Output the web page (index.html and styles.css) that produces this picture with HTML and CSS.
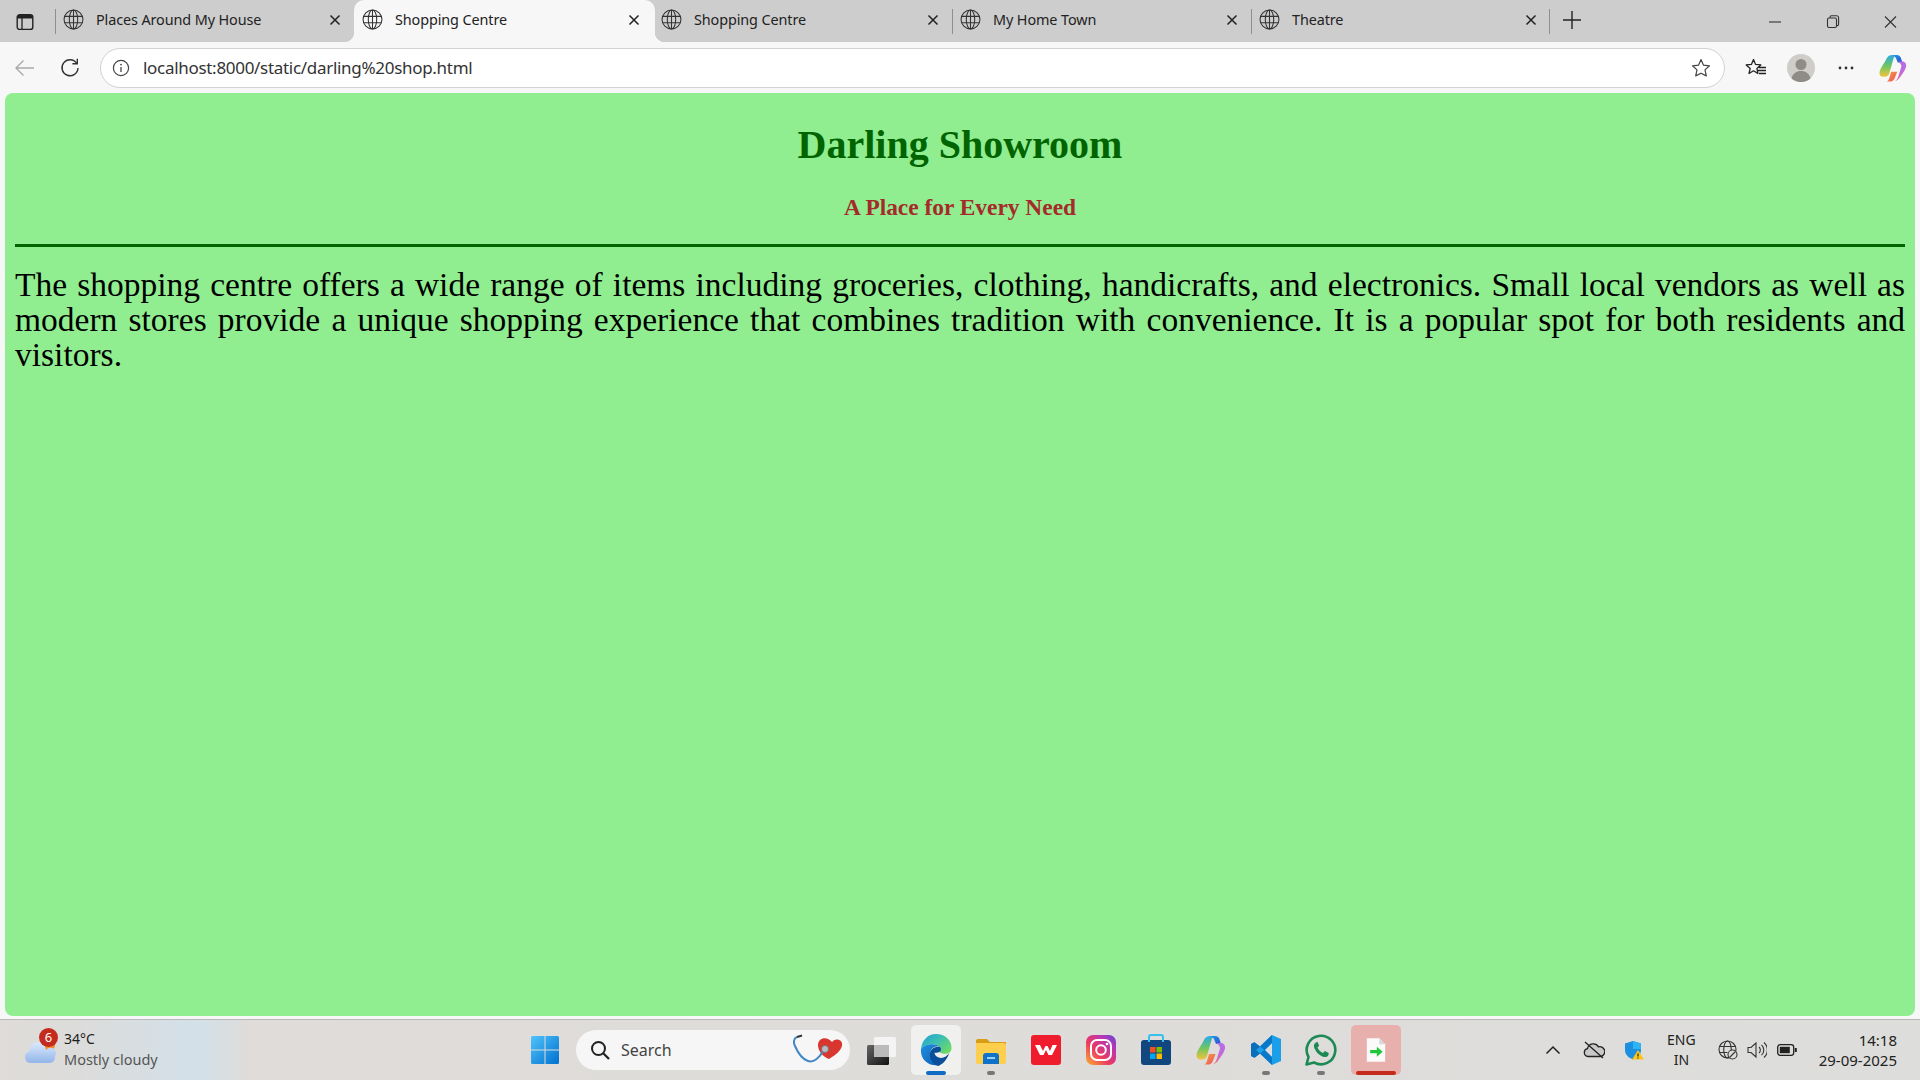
FILE: index.html
```html
<!DOCTYPE html>
<html lang="en">
<head>
<meta charset="utf-8">
<title>Shopping Centre</title>
<link rel="stylesheet" href="styles.css">
</head>
<body>
<svg class="defs" width="0" height="0" aria-hidden="true">
  <defs>
    <symbol id="globe" viewBox="0 0 20 20"><g fill="none" stroke="#333" stroke-width="1"><circle cx="10" cy="10" r="9"/><ellipse cx="10" cy="10" rx="4" ry="9"/><path d="M10 1v18M1.700 7h16.600M1.700 13h16.600"/></g></symbol>
    <symbol id="close" viewBox="0 0 12 12"><path d="M1.500 1.500l9 9M10.500 1.500l-9 9" stroke="#222" stroke-width="1.500" fill="none"/></symbol>
    <linearGradient id="cpa" x1="0" y1="0" x2="1" y2="1"><stop offset="0" stop-color="#1f9de8"/><stop offset="1" stop-color="#2c4fd0"/></linearGradient>
    <linearGradient id="cpb" x1="0" y1="0" x2="0" y2="1"><stop offset="0" stop-color="#2aa8ea"/><stop offset=".5" stop-color="#6cc660"/><stop offset="1" stop-color="#f5c33c"/></linearGradient>
    <linearGradient id="cpc" x1="0" y1="0" x2="0" y2="1"><stop offset="0" stop-color="#b56fe6"/><stop offset=".55" stop-color="#c06ad8"/><stop offset="1" stop-color="#ee6a8a"/></linearGradient>
    <linearGradient id="cpd" x1="0" y1="0" x2="1" y2="1"><stop offset="0" stop-color="#f5a03c"/><stop offset="1" stop-color="#ef4f5e"/></linearGradient>
    <symbol id="copilot" viewBox="0 0 30 30">
      <path d="M8 5c1.500-3 3.500-4 6.500-4H20c-2.500.3-3.800 1.800-4.500 4L11 21c-.8 2.500-2.500 3.500-5 3.500H4.500c-3 0-4.500-2.500-3.800-5.500C1.500 15 5 11 8 5z" fill="url(#cpb)"/>
      <path d="M14 1h5c2.500 0 4 1.500 4.600 3.500L25 9h-5l-1.300-3.300C18 3.500 16.300 1.500 14 1z" fill="url(#cpa)"/>
      <path d="M20 8h5c3 0 4.500 2.500 4 5.500-.7 4-4 8-6.500 11.500-1.200 1.800-2.500 3.500-5.500 4 2-1 3-2.500 3.600-4.500l3.400-11c.4-1.500-1.500-4.500-4-5.500z" fill="url(#cpc)"/>
      <path d="M11 26l2-7h6.500l-2.500 6.500c-.7 2-2.300 4-4.500 4H8c2-.5 2.500-2 3-3.500z" fill="url(#cpd)"/>
    </symbol>
  </defs>
</svg>
<div class="tabstrip">
  <div class="sidebtn"><svg width="18" height="18" viewBox="0 0 18 18"><rect x="1.200" y="1.800" width="15.600" height="14.600" rx="2.500" fill="none" stroke="#222" stroke-width="1.400"/><path d="M1.500 5.500V4a2 2 0 0 1 2-2h11a2 2 0 0 1 2 2v1.500z" fill="#222"/><path d="M6 5v11" stroke="#222" stroke-width="1.300"/></svg></div>
  <div class="tab sep"><svg class="globe"><use href="#globe"/></svg><span class="tabtitle">Places Around My House</span><svg class="x"><use href="#close"/></svg></div>
  <div class="tab active"><svg class="globe"><use href="#globe"/></svg><span class="tabtitle">Shopping Centre</span><svg class="x"><use href="#close"/></svg></div>
  <div class="tab"><svg class="globe"><use href="#globe"/></svg><span class="tabtitle">Shopping Centre</span><svg class="x"><use href="#close"/></svg></div>
  <div class="tab sep"><svg class="globe"><use href="#globe"/></svg><span class="tabtitle">My Home Town</span><svg class="x"><use href="#close"/></svg></div>
  <div class="tab sep"><svg class="globe"><use href="#globe"/></svg><span class="tabtitle">Theatre</span><svg class="x"><use href="#close"/></svg></div>
  <div class="newtab"><svg width="18" height="18" viewBox="0 0 18 18"><path d="M9 0v18M0 9h18" stroke="#222" stroke-width="1.400"/></svg></div>
  <div class="winctl">
    <svg width="52" height="14" viewBox="0 0 52 14"><path d="M17 7h12" stroke="#333" stroke-width="1.100"/></svg>
    <svg width="58" height="14" viewBox="0 0 58 14"><g fill="none" stroke="#333" stroke-width="1.100"><rect x="23.500" y="3" width="9" height="9.500" rx="1.500"/><path d="M26 3V2.200A1.400 1.400 0 0 1 27.400 .8h5.200a2 2 0 0 1 2 2v6.400a1.400 1.400 0 0 1-1.400 1.400h-.7"/></g></svg>
    <svg width="58" height="14" viewBox="0 0 58 14"><path d="M23 1.500l11 11M34 1.500l-11 11" stroke="#333" stroke-width="1.100"/></svg>
  </div>
</div>
<div class="toolbar">
  <div class="navbtn"><svg width="22" height="18" viewBox="0 0 22 18"><path d="M20 9H2M9.500 1.500L2 9l7.500 7.500" fill="none" stroke="#aaa" stroke-width="1.400"/></svg></div>
  <div class="navbtn"><svg width="20" height="20" viewBox="0 0 20 20"><path d="M16.600 5.200A8 8 0 1 0 18 10" fill="none" stroke="#333" stroke-width="1.400"/><path d="M17.300 .8v4.900h-4.900" fill="none" stroke="#333" stroke-width="1.400"/></svg></div>
  <div class="address">
    <svg width="18" height="18" viewBox="0 0 18 18"><circle cx="9" cy="9" r="7.600" fill="none" stroke="#444" stroke-width="1.200"/><path d="M9 8v5" stroke="#444" stroke-width="1.300"/><circle cx="9" cy="5.600" r=".9" fill="#444"/></svg>
    <span class="url">localhost:8000/static/darling%20shop.html</span>
    <svg class="star" width="20" height="20" viewBox="0 0 20 20"><path d="M10 1.600l2.500 5.600 6 .6-4.500 4.100 1.300 6L10 15.200l-5.300 2.700 1.300-6L1.500 7.800l6-.6z" fill="none" stroke="#444" stroke-width="1.200" stroke-linejoin="round"/></svg>
  </div>
  <div class="tools">
    <svg class="favs" width="22" height="20" viewBox="0 0 22 20"><path d="M8.500 1.500l2.100 4.900 5.200.5-3.900 3.500 1 5.100-4.400-2.700-4.500 2.700 1.200-5.100L1.200 6.900l5.200-.5zM14 9.500h7M12.500 12.500h8.500M14 15.500h7" fill="none" stroke="#222" stroke-width="1.300" stroke-linejoin="round"/></svg>
    <svg class="avatar" width="28" height="28" viewBox="0 0 28 28"><circle cx="14" cy="14" r="14" fill="#cfcdca"/><circle cx="14" cy="10.500" r="5.500" fill="#8f8b87"/><path d="M4.500 24.500c1-5 5-7.500 9.500-7.500s8.500 2.500 9.500 7.500A14 14 0 0 1 14 28a14 14 0 0 1-9.500-3.500z" fill="#8f8b87"/></svg>
    <svg class="dots" width="16" height="4" viewBox="0 0 16 4"><circle cx="2" cy="2" r="1.400" fill="#333"/><circle cx="8" cy="2" r="1.400" fill="#333"/><circle cx="14" cy="2" r="1.400" fill="#333"/></svg>
    <svg class="copilot" width="28" height="28"><use href="#copilot"/></svg>
  </div>
</div>
<main class="viewport">
  <h1 class="title">Darling Showroom</h1>
  <h3 class="subtitle">A Place for Every Need</h3>
  <hr class="rule">
  <p class="copy">The shopping centre offers a wide range of items including groceries, clothing, handicrafts, and electronics. Small local vendors as well as modern stores provide a unique shopping experience that combines tradition with convenience. It is a popular spot for both residents and visitors.</p>
</main>
<footer class="taskbar">
  <div class="weather">
    <div class="wicon">
      <svg width="38" height="40" viewBox="0 0 38 40"><defs><linearGradient id="cl" x1="0" y1="0" x2="0" y2="1"><stop offset="0" stop-color="#dbe9fb"/><stop offset="1" stop-color="#92b6ea"/></linearGradient></defs><circle cx="28" cy="15" r="6" fill="#f08a24"/><path d="M10 33a6 6 0 0 1-1.500-11.800A8 8 0 0 1 25 20a5.500 5.500 0 0 1 9 6.500 5.500 5.500 0 0 1-6 6.500z" fill="url(#cl)"/></svg>
      <span class="badge">6</span>
    </div>
    <div class="wtext"><span class="temp">34°C</span><span class="cond">Mostly cloudy</span></div>
  </div>
  <div class="center">
    <div class="tb"><svg width="30" height="30" viewBox="0 0 30 30"><defs><linearGradient id="win" x1="0" y1="0" x2="1" y2="1"><stop offset="0" stop-color="#4fc4fb"/><stop offset="1" stop-color="#0070cf"/></linearGradient></defs><path d="M1 2.500A1.500 1.500 0 0 1 2.500 1H14.500V14.500H1zM15.500 1H27.500A1.500 1.500 0 0 1 29 2.500V14.500H15.500zM1 15.500H14.500V29H2.500A1.500 1.500 0 0 1 1 27.500zM15.500 15.500H29V27.500A1.500 1.500 0 0 1 27.500 29H15.500z" fill="url(#win)"/></svg></div>
    <div class="search">
      <svg width="22" height="22" viewBox="0 0 22 22"><circle cx="9.500" cy="9.500" r="6.500" fill="none" stroke="#222" stroke-width="2"/><path d="M14.500 14.500L20 20" stroke="#222" stroke-width="2.300"/></svg>
      <span class="stext">Search</span>
      <svg class="doodle" width="50" height="32" viewBox="0 0 50 32"><path d="M25 11c0-5 5-8 10-6 2 1 3 2 4 3 3-4 9-3 10 1 1 4-3 9-7 12l-6 4c-6-2-11-8-11-14z" fill="#d8362e"/><path d="M4 3C1 4 0 8 2 12c3 7 7 13 13 15 6 2 12-4 15-10" fill="none" stroke="#3f88c5" stroke-width="2"/><path d="M4 3l5-1.500" stroke="#333" stroke-width="2" fill="none"/><circle cx="32" cy="15" r="3.500" fill="#b9bcc0" stroke="#777"/></svg>
    </div>
    <div class="tb"><svg width="30" height="30" viewBox="0 0 30 30"><defs><linearGradient id="tv" x1="0" y1="0" x2="1" y2="1"><stop offset="0" stop-color="#666"/><stop offset="1" stop-color="#111"/></linearGradient></defs><rect x="8" y="2" width="22" height="20" rx="1.500" fill="#f4f4f4"/><rect x="1" y="10" width="22" height="20" rx="1.500" fill="url(#tv)"/><rect x="8" y="10" width="15" height="12" fill="#bbb"/></svg></div>
    <div class="tb on"><svg width="32" height="32" viewBox="0 0 32 32"><defs><linearGradient id="eg" x1="0" y1="0" x2="1" y2=".8"><stop offset="0" stop-color="#1d9fd8"/><stop offset=".5" stop-color="#3cc0b0"/><stop offset="1" stop-color="#6fdc60"/></linearGradient><linearGradient id="eb" x1="0" y1="0" x2="1" y2="1"><stop offset="0" stop-color="#1f8fe0"/><stop offset="1" stop-color="#0f60b4"/></linearGradient></defs><path d="M1 15C2 6 8 0 16 0c9 0 15.500 6 15.500 14 0 2.500-1 4.500-4 5.500-3 .7-7 .2-8-1.500 2-1 2.300-3.500 0-5.500-5-4-16-2-18.500 2.500z" fill="url(#eg)"/><path d="M1 15c2.500-4.500 13.500-6.500 18.500-2.500-6-1-10 3-9 9 .6 4.500 4 8 8 9.500C8 32.500 0 25 1 15z" fill="url(#eb)"/><path d="M19.500 12.500c2.300 2 2 4.500 0 5.500-2 1-4.300.5-5 1 .5 3.500 5 6 9 4.500 2.500-1 4.500-2.500 6-5-2.500 8-8 12.500-11.500 13.500-4-1.500-7.400-5-8-9.500-1-6 3-10 9.500-10z" fill="#0b4f9a"/></svg><i class="bar blue"></i></div>
    <div class="tb"><svg width="30" height="28" viewBox="0 0 30 28"><path d="M0 5a2 2 0 0 1 2-2h9l3 3h16v3H0z" fill="#d79d15"/><path d="M0 7h28a2 2 0 0 1 2 2v17a2 2 0 0 1-2 2H2a2 2 0 0 1-2-2z" fill="#fdcf4d"/><path d="M7 20a3 3 0 0 1 3-3h10a3 3 0 0 1 3 3v8H7z" fill="#0f73c9"/><rect x="11" y="21" width="8" height="2" fill="#9ed0f5"/></svg><i class="bar grey"></i></div>
    <div class="tb"><svg width="30" height="30" viewBox="0 0 30 30"><rect width="30" height="30" rx="3" fill="#ef1c2d"/><path d="M4 10h5l3 6 2.500-5h2L19 16l2.500-6H26l-5 10h-3.500L15 15l-2.500 5H9z" fill="#fff"/></svg></div>
    <div class="tb"><svg width="30" height="30" viewBox="0 0 30 30"><defs><linearGradient id="ig" x1="0" y1="1" x2="1" y2="0"><stop offset="0" stop-color="#f9b233"/><stop offset=".4" stop-color="#ec3a5d"/><stop offset=".75" stop-color="#b935b5"/><stop offset="1" stop-color="#5b4bd6"/></linearGradient></defs><rect width="30" height="30" rx="7" fill="url(#ig)"/><rect x="5" y="5" width="20" height="20" rx="6" fill="none" stroke="#fff" stroke-width="2"/><circle cx="15" cy="15" r="4.800" fill="none" stroke="#fff" stroke-width="2"/><circle cx="21" cy="9" r="1.300" fill="#fff"/></svg></div>
    <div class="tb"><svg width="30" height="32" viewBox="0 0 30 32"><rect y="6" width="30" height="25" rx="3" fill="#12467f"/><path d="M8 8V3a2 2 0 0 1 2-2h10a2 2 0 0 1 2 2v5" fill="none" stroke="#35c0ee" stroke-width="2"/><rect x="9" y="13" width="5.500" height="5.500" fill="#f25022"/><rect x="15.500" y="13" width="5.500" height="5.500" fill="#7fba00"/><rect x="9" y="19.500" width="5.500" height="5.500" fill="#00a4ef"/><rect x="15.500" y="19.500" width="5.500" height="5.500" fill="#ffb900"/></svg></div>
    <div class="tb"><svg width="30" height="30"><use href="#copilot"/></svg></div>
    <div class="tb"><svg width="30" height="30" viewBox="0 0 30 30"><path d="M21 0l9 4v22l-9 4-12-11.500-5.500 4.200L0 21V9l3.500-1.700L9 11.500zM21 8l-7 7 7 7z" fill="#1a9fe8"/><path d="M9 11.500L3.500 7.300 0 9v12l3.500 1.700L9 18.500 5 15z" fill="#0a6fb8"/><path d="M21 0l-12 11.500 4.500 3.500L21 8z" fill="#0a78c8"/><path d="M21 30L9 18.500l4.500-3.500L21 22z" fill="#0a78c8"/></svg><i class="bar grey"></i></div>
    <div class="tb"><svg width="32" height="32" viewBox="0 0 32 32"><path d="M1.500 30.500l2-7.500A14.300 14.300 0 1 1 9 28.500z" fill="none" stroke="#1d8a55" stroke-width="2.600" stroke-linejoin="round"/><path d="M11 8.500c-1.500.5-2.500 2.500-2 4.500 1 4 5.500 9 10 10 2 .4 4-.5 4.500-2.200l.3-1.800-4-2-1.800 2c-2.500-1-4.500-3-5.500-5.500l1.700-1.800-1.800-4z" fill="#1d8a55"/></svg><i class="bar grey"></i></div>
    <div class="tb run"><svg width="20" height="26" viewBox="0 0 24 30"><path d="M1 1h15l7 7v21H1z" fill="#fafafa"/><path d="M16 1v7h7z" fill="#d7d7d7"/><path d="M5 15h8v-4l7 6-7 6v-4H5z" fill="#1fc63c"/></svg><i class="bar red"></i></div>
  </div>
  <div class="tray">
    <svg class="tr1" width="16" height="10" viewBox="0 0 16 10"><path d="M1.500 8.500L8 2l6.500 6.500" fill="none" stroke="#222" stroke-width="1.500"/></svg>
    <svg class="tr2" width="22" height="18" viewBox="0 0 22 18"><path d="M5 15.500a4 4 0 0 1-.5-7.900 6 6 0 0 1 11-1.800 4.800 4.800 0 0 1 2.500 9.700z" fill="#c9c9c9" stroke="#222" stroke-width="1.300"/><path d="M2 1l18 16" stroke="#222" stroke-width="1.300"/></svg>
    <svg class="tr3" width="20" height="20" viewBox="0 0 20 20"><path d="M9 1l8 2.500V10c0 5-4 8-8 9.500C5 18 1 15 1 10V3.500z" fill="#1b8fe0"/><path d="M9 1l8 2.500V9H9z" fill="#2fb4f3"/><path d="M14 10l6 9.500H8z" fill="#fcc419"/><path d="M14 13.500v3M14 17.500v1" stroke="#222" stroke-width="1.200"/></svg>
    <div class="lang"><span>ENG</span><span>IN</span></div>
    <svg class="tr4" width="20" height="20" viewBox="0 0 20 20"><g fill="none" stroke="#333" stroke-width="1.100"><circle cx="9.500" cy="9.500" r="8.500"/><ellipse cx="9.500" cy="9.500" rx="3.800" ry="8.500"/><path d="M1.500 6.500h16M1.500 12.500h8"/><circle cx="14.500" cy="14.500" r="4.500" fill="#dcdcda"/><path d="M11.500 17.500l6-6"/></g></svg>
    <svg class="tr5" width="20" height="18" viewBox="0 0 20 18"><path d="M1 6.500h3L9 2v14l-5-4.500H1z M12 6a4 4 0 0 1 0 6M14.500 3.800a7 7 0 0 1 0 10.400M17 1.500a10 10 0 0 1 0 15" fill="none" stroke="#333" stroke-width="1.100"/></svg>
    <svg class="tr6" width="20" height="12" viewBox="0 0 20 12"><rect x=".7" y=".7" width="16" height="10.600" rx="2.500" fill="none" stroke="#222" stroke-width="1.300"/><rect x="2.800" y="2.800" width="10" height="6.400" fill="#222"/><rect x="17.800" y="4" width="2" height="4" fill="#222"/></svg>
    <div class="clock"><span>14:18</span><span>29-09-2025</span></div>
  </div>
</footer>
</body>
</html>
```
FILE: styles.css
```css
* { box-sizing: border-box; }
html, body { margin: 0; padding: 0; height: 100%; overflow: hidden; }
body {
  width: 1920px;
  height: 1080px;
  display: flex;
  flex-direction: column;
  background: #f7f7f7;
  font-family: "Noto Sans", "Open Sans", sans-serif;
  color: #222;
}
.defs { position: absolute; }

.tabstrip { height: 42px; flex: none; background: #cdcdcd; display: flex; align-items: stretch; padding-left: 5px; }
.sidebtn { width: 40px; display: flex; align-items: center; justify-content: center; margin-right: 10px; padding-top: 2px; }
.tab { width: 299px; flex: none; display: flex; align-items: center; padding: 0 13px 3px 8px; gap: 12px; position: relative; }
.tab.sep::before { content: ""; position: absolute; left: 0; top: 9px; height: 25px; width: 1px; background: #8f8f8f; }
.tab.active { background: #f7f7f7; border-radius: 10px 10px 0 0; width: 301px; margin-right: -2px; padding-right: 15px; }
.tab.active::before, .tab.active::after { content: ""; position: absolute; bottom: 0; width: 10px; height: 10px; background: radial-gradient(circle at 0 0, #cdcdcd 10px, #f7f7f7 10.5px); }
.tab.active::before { left: -10px; }
.tab.active::after { right: -10px; background: radial-gradient(circle at 100% 0, #cdcdcd 10px, #f7f7f7 10.5px); }
.globe { width: 21px; height: 21px; flex: none; }
.x { width: 12px; height: 12px; flex: none; margin-left: auto; }
.tabtitle { font-size: 14.400px; letter-spacing: -.1px; white-space: nowrap; color: #222; }
.newtab { width: 44px; flex: none; display: flex; align-items: center; justify-content: center; position: relative; margin-left: -1px; padding: 0 0 2px 2px; }
.newtab::before { content: ""; position: absolute; left: 0; top: 9px; height: 25px; width: 1px; background: #8f8f8f; }
.winctl { margin-left: auto; display: flex; align-items: center; padding-top: 2px; }
.winctl svg { display: block; }

.toolbar { height: 51px; flex: none; display: flex; align-items: center; padding: 0 0 0 2px; background: #f7f7f7; }
.navbtn { width: 45px; display: flex; justify-content: center; align-items: center; }
.address {
  width: 1625px;
  height: 40px;
  margin-left: 8px;
  border: 1px solid #d2d2d2;
  border-radius: 20px;
  background: #fff;
  display: flex;
  align-items: center;
  padding: 0 13px 0 11px;
  gap: 13px;
}
.url { font-size: 17px; color: #333; letter-spacing: -.3px; white-space: nowrap; }
.star { margin-left: auto; }
.tools { display: flex; align-items: center; margin-left: 20px; }
.favs { margin-right: 20px; }
.avatar { margin-right: 23px; }
.dots { margin-right: 25px; }

.viewport {
  flex: none;
  height: 923px;
  margin: 0 5px;
  padding: 1px 10px 0;
  background: #90ee90;
  border-radius: 8px;
  font-family: "Liberation Serif", "Times New Roman", serif;
}
.title { font-size: 40px; line-height: 44px; font-weight: 700; color: #006400; text-align: center; margin: 29px 0 0; }
.subtitle { font-size: 23.400px; line-height: 25px; font-weight: 700; color: #a52a2a; text-align: center; margin: 28px 0 0; }
.rule { height: 3px; border: 0; background: #006400; margin: 24px 0 0; }
.copy { font-size: 33.500px; line-height: 35px; color: #000; text-align: justify; margin: 20px 0 0; }

.taskbar {
  flex: 1;
  margin-top: 3px;
  border-top: 1px solid #b9b9b9;
  display: flex;
  align-items: center;
  background: linear-gradient(90deg, #dfdcd9 0, #dcdcda 4%, #d3e0e8 10%, #d3e0e8 10.500%, #dfdcd9 13%, #dddddb 100%);
}
.weather { width: 520px; flex: none; display: flex; align-items: center; padding-left: 21px; gap: 5px; }
.wicon { position: relative; width: 38px; height: 40px; display: flex; align-items: flex-end; }
.badge { position: absolute; right: 1px; top: -2px; width: 19px; height: 19px; border-radius: 50%; background: #c42b1c; color: #fff; font-size: 13px; line-height: 18px; text-align: center; }
.wtext { display: flex; flex-direction: column; margin-bottom: 2px; }
.temp { font-size: 14px; line-height: 20px; color: #1c1c1c; }
.cond { font-size: 14.500px; line-height: 20px; color: #555; }
.center { display: flex; align-items: center; gap: 5px; }
.tb { width: 50px; height: 50px; display: flex; align-items: center; justify-content: center; position: relative; border-radius: 5px; }
.tb.on { background: #f0f0ef; }
.tb.run { background: #e8b0ac; }
.bar { position: absolute; bottom: 0; left: 50%; transform: translateX(-50%); height: 4px; border-radius: 2px; }
.bar.blue { width: 20px; background: #0f6cc4; }
.bar.grey { width: 8px; background: #777; }
.bar.red { width: 40px; background: #c42b1c; }
.search { width: 274px; height: 40px; margin: 0 1px; border-radius: 20px; background: #f6f6f6; display: flex; align-items: center; padding: 0 0 0 13px; gap: 10px; }
.stext { font-size: 16px; color: #444; }
.doodle { margin-left: auto; margin-right: 7px; }
.tray { margin-left: auto; display: flex; align-items: center; padding-right: 23px; }
.tr1 { margin-right: 22px; }
.tr2 { margin-right: 19px; }
.tr3 { margin-right: 23px; }
.lang { display: flex; flex-direction: column; align-items: center; font-size: 14px; line-height: 20px; color: #222; margin-right: 22px; }
.tr4 { margin-right: 9px; }
.tr5 { margin-right: 10px; }
.tr6 { margin-right: 22px; }
.clock { display: flex; flex-direction: column; align-items: flex-end; font-size: 15px; line-height: 20px; color: #222; }
```
